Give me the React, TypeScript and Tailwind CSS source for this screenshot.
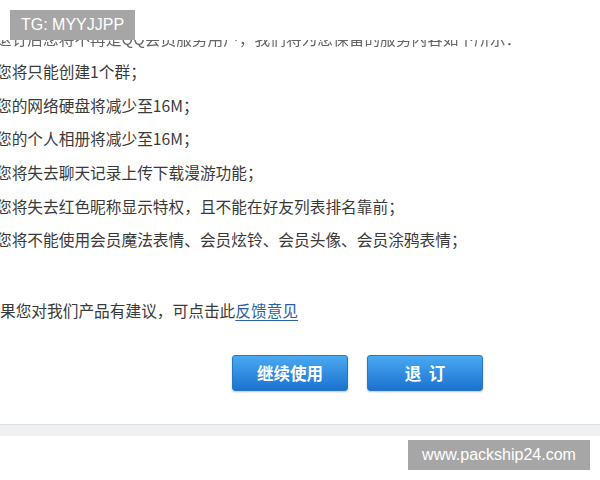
import React from 'react';

const lines = [
  '您将只能创建1个群；',
  '您的网络硬盘将减少至16M；',
  '您的个人相册将减少至16M；',
  '您将失去聊天记录上传下载漫游功能；',
  '您将失去红色昵称显示特权，且不能在好友列表排名靠前；',
  '您将不能使用会员魔法表情、会员炫铃、会员头像、会员涂鸦表情；',
];

const cjk = { fontFamily: "'Noto Sans CJK SC', 'Noto Sans', sans-serif" };

function BlueButton({ label }: { label: string }) {
  return (
    <button
      className="w-[116px] h-[36px] rounded-[3px] border border-[#2a76c2] bg-gradient-to-b from-[#4aa9f1] to-[#1a72d0] text-white text-[16.5px] font-bold shadow-[0_1px_2px_rgba(0,0,0,0.25)] whitespace-pre"
      style={cjk}
    >
      {label}
    </button>
  );
}

export default function App() {
  return (
    <div className="relative w-[600px] h-[480px] bg-white overflow-hidden">
      <div className="pt-[40px]">
        <div className="overflow-hidden text-[15.7px] leading-[33.6px] text-[#3a3a3a]" style={cjk}>
          <p className="-mt-[18.4px] -ml-[4px] whitespace-nowrap blur-[0.6px] text-[#666]">
            退订后您将不再是QQ会员服务用户，我们将为您保留的服务内容如下所示：
          </p>
          {lines.map((line) => (
            <p key={line} className="-ml-[4px] whitespace-nowrap">
              {line}
            </p>
          ))}
          <p className="mt-[37px] whitespace-nowrap">
            果您对我们产品有建议，可点击此
            <span className="text-[#2b62a3] underline underline-offset-[3px]">反馈意见</span>
          </p>
        </div>

        <div className="flex gap-[19px] pl-[232px] mt-[28px]">
          <BlueButton label="继续使用" />
          <BlueButton label="退  订" />
        </div>

        <div className="mt-[33px] h-[12px] border-t border-[#dcdfe2] bg-[#eef0f2]" />
      </div>

      <div
        className="absolute left-[10px] top-[10px] w-[125px] h-[30px] bg-[#a6a6a6] text-white text-[16px] flex items-center justify-center"
        style={{ fontFamily: "'Liberation Sans', Arial, sans-serif" }}
      >
        TG: MYYJJPP
      </div>
      <div
        className="absolute left-[408px] top-[440px] w-[182px] h-[30px] bg-[#a6a6a6] text-white text-[16px] flex items-center justify-center"
        style={{ fontFamily: "'Liberation Sans', Arial, sans-serif" }}
      >
        www.packship24.com
      </div>
    </div>
  );
}
